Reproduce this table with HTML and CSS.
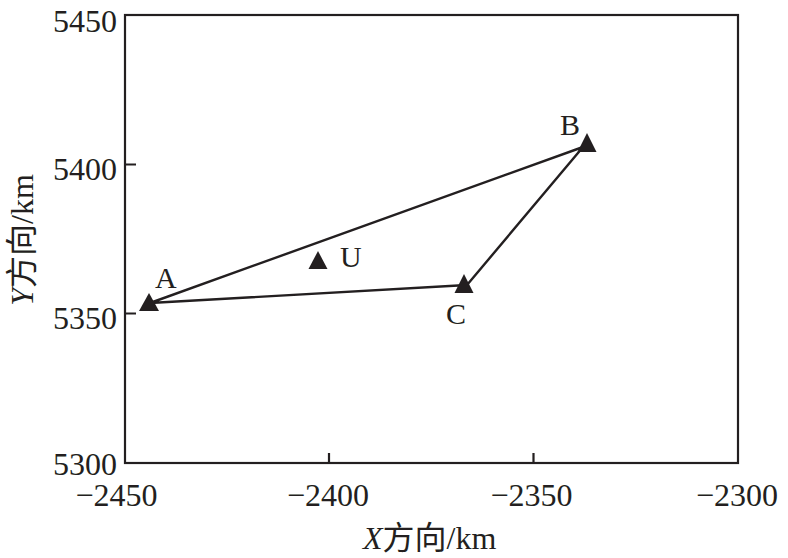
FILE: index.html
```html
<!DOCTYPE html>
<html>
<head>
<meta charset="utf-8">
<link rel="stylesheet" href="styles.css">
</head>
<body>
<div class="figure">
<svg class="chart" width="788" height="558" viewBox="0 0 788 558" xmlns="http://www.w3.org/2000/svg">
  <!-- plot frame -->
  <rect class="frame" x="125" y="15" width="613" height="448"/>
  <!-- ticks -->
  <path class="tick" d="M125 164.5 H136 M125 313.5 H136 M329 463 V453 M533.5 463 V453"/>
  <!-- y tick labels -->
  <text class="tl ye" x="117" y="32">5450</text>
  <text class="tl ye" x="117" y="180">5400</text>
  <text class="tl ye" x="117" y="329">5350</text>
  <text class="tl ye" x="117" y="475">5300</text>
  <!-- x tick labels -->
  <text class="tl xm" x="116.5" y="506">−2450</text>
  <text class="tl xm" x="328" y="506">−2400</text>
  <text class="tl xm" x="531.5" y="506">−2350</text>
  <text class="tl xm" x="737" y="506">−2300</text>
  <!-- axis titles -->
  <text class="axis" x="363" y="549"><tspan class="it">X</tspan>方向/km</text>
  <text class="axis xm" transform="translate(33 240) rotate(-90)"><tspan class="it">Y</tspan>方向/km</text>
  <!-- triangle edges -->
  <polyline class="edge" points="150,303 583,147 467,285 150,303"/>
  <!-- markers -->
  <polygon class="mark" points="149,293 159,311 139,311"/>
  <polygon class="mark" points="587,133 596.5,152 577.5,152"/>
  <polygon class="mark" points="464,274 473.5,293 454.5,293"/>
  <polygon class="mark" points="318,251 327.5,269 308.5,269"/>
  <!-- point labels -->
  <text class="pl" x="155" y="288">A</text>
  <text class="pl" x="560" y="135">B</text>
  <text class="pl" x="340" y="267">U</text>
  <text class="pl" x="446" y="324">C</text>
</svg>
</div>
</body>
</html>
```
FILE: styles.css
```css
html, body {
  margin: 0;
  padding: 0;
  background: #ffffff;
}
.figure {
  width: 788px;
  height: 558px;
  overflow: hidden;
}
.chart {
  display: block;
}
.frame {
  fill: none;
  stroke: #231f20;
  stroke-width: 2.2;
}
.tick {
  fill: none;
  stroke: #231f20;
  stroke-width: 2.2;
}
.edge {
  fill: none;
  stroke: #231f20;
  stroke-width: 2.4;
  stroke-linejoin: round;
}
.mark {
  fill: #231f20;
}
.tl {
  font-family: "Liberation Serif", "Times New Roman", serif;
  font-size: 32px;
  fill: #231f20;
}
.ye {
  text-anchor: end;
}
.xm {
  text-anchor: middle;
}
.axis {
  font-family: "Liberation Serif", "Noto Sans CJK SC", serif;
  font-size: 32px;
  fill: #231f20;
}
.it {
  font-style: italic;
}
.pl {
  font-family: "Liberation Serif", "Times New Roman", serif;
  font-size: 30px;
  fill: #231f20;
}
```
